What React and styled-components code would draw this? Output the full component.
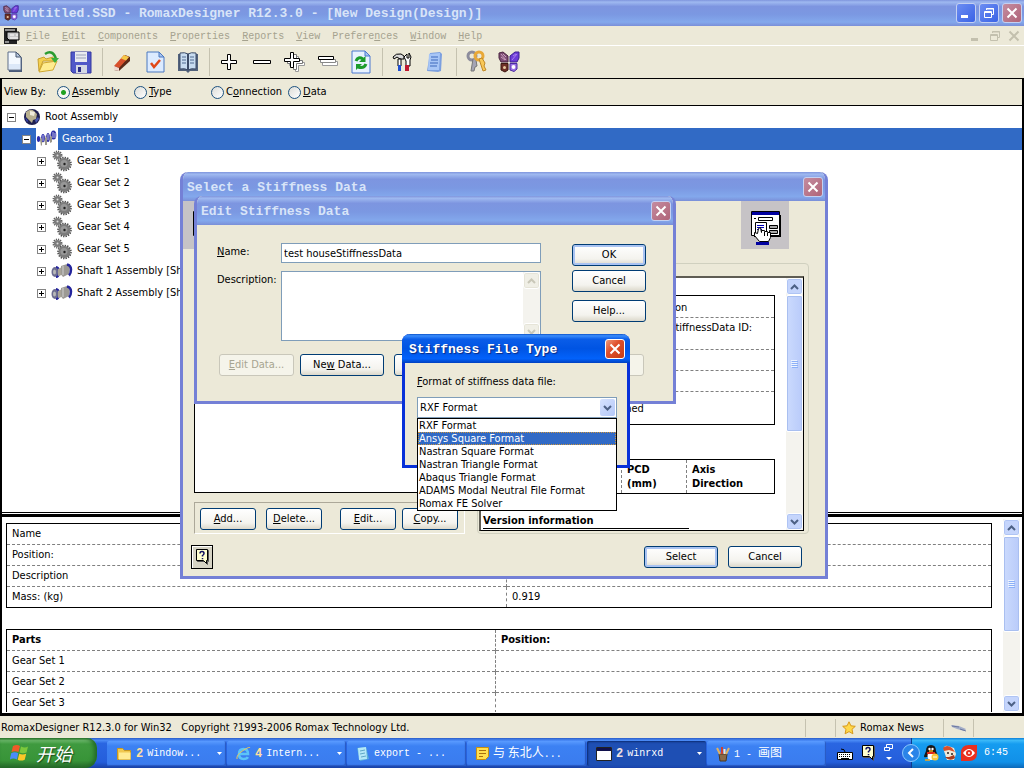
import { useState } from "react";
import styled, { createGlobalStyle, css } from "styled-components";

const colors = {
    face: "#ece9d8",
    select: "#316ac5",
    line: "#808080",
    buttonBorder: "#003c74",
    fieldBorder: "#7f9db9",
    disabled: "#a7a591",
};

const mono = `"Liberation Mono", "Noto Sans CJK SC", monospace`;

const GlobalStyle = createGlobalStyle`
    * {
        box-sizing: border-box;
    }

    body {
        margin: 0;
        background: #000;
        color: #000;
        font: 11px/14px "DejaVu Sans Condensed", "Noto Sans", sans-serif;
    }

    button, input, select, textarea {
        font: inherit;
        color: inherit;
    }

    svg {
        display: block;
        flex: none;
    }
`;

const Desktop = styled.div`
    position: relative;
    display: flex;
    flex-direction: column;
    height: 100vh;
    min-height: 640px;
    overflow: hidden;
`;

/* ---------- window chrome ---------- */

const TitleBar = styled.header`
    flex: none;
    display: flex;
    align-items: center;
    gap: 3px;
    height: ${({ $height }) => $height || 29}px;
    padding: 0 ${({ $main }) => ($main ? "2px 0 3px" : "2px 0 4px")};
    color: ${({ $active }) => ($active ? "#fff" : "#d8e4f8")};
    background: ${({ $active }) =>
        $active
            ? "linear-gradient(#0a51c8, #3b8dfc 6%, #0a5de8 18%, #0054e3 50%, #0262fb 85%, #0040c0)"
            : "linear-gradient(#7f95dd, #9fb9f0 8%, #7d95e0 25%, #7b98e2 55%, #83a8ec 85%, #7a8fd8)"};
`;

const TitleText = styled.h1`
    flex: 1;
    margin: 0;
    padding-top: 2px;
    font: bold 13px/16px ${mono};
    white-space: pre;
    ${({ $active }) =>
        $active &&
        css`
            text-shadow: 1px 1px 1px #0a2a80;
        `}
`;

const CaptionButton = styled.button`
    display: flex;
    align-items: center;
    justify-content: center;
    width: 20px;
    height: 20px;
    padding: 0;
    border: 1px solid ${({ $active }) => ($active ? "#fff" : "#c4d0f2")};
    border-radius: 3px;
    background: ${({ $close, $active }) => {
        if (!$close) return "linear-gradient(135deg, #6c8df2, #3a63e6)";
        return $active
            ? "linear-gradient(135deg, #ee9a7c, #e0502c 40%, #c43c14)"
            : "linear-gradient(135deg, #c48ca0, #b06478)";
    }};
`;

const MenuBar = styled.nav`
    flex: none;
    display: flex;
    align-items: center;
    gap: 12px;
    height: 20px;
    padding: 0 4px;
    background: ${colors.face};
    border-bottom: 1px solid #fff;
`;

const MenuItem = styled.button`
    padding: 2px 0 0;
    border: none;
    background: none;
    color: #a5a28f;
    font: 10px/14px ${mono};
`;

const MenuIcon = styled.span`
    margin-right: -6px;
`;

const MdiButtons = styled.div`
    display: flex;
    gap: 7px;
    margin-left: auto;
    color: #c3c0ae;
`;

const PlainButton = styled.button`
    padding: 0;
    border: none;
    background: none;
    color: inherit;
`;

const Toolbar = styled.div`
    flex: none;
    display: flex;
    align-items: center;
    height: 32px;
    background: ${colors.face};
`;

const ToolButton = styled.button`
    display: flex;
    align-items: center;
    justify-content: center;
    width: 33px;
    height: 28px;
    padding: 0;
    border: none;
    background: none;

    &:first-child {
        margin-left: -2px;
    }
`;

const ToolSeparator = styled.span`
    width: 1px;
    height: 28px;
    margin: 0 2px 0 5px;
    background: #c5c2b0;
`;

/* ---------- view selector ---------- */

const Workspace = styled.main`
    flex: 1;
    min-height: 0;
    display: flex;
    flex-direction: column;
    border: solid #000;
    border-width: 1px 2px 3px;
`;

const ViewBar = styled.div`
    flex: none;
    display: flex;
    align-items: center;
    height: 27px;
    padding-left: 2px;
    background: ${colors.face};
    border-bottom: 1px solid #000;
`;

const ViewCaption = styled.span`
    width: 53px;
`;

const RadioLabel = styled.label`
    display: flex;
    align-items: center;
    gap: 2px;
    width: 77px;
    white-space: nowrap;
`;

const Radio = styled.input`
    appearance: none;
    flex: none;
    width: 13px;
    height: 13px;
    margin: 0;
    border: 1px solid #1c5180;
    border-radius: 50%;
    background: linear-gradient(135deg, #dcdcd7, #fff);

    &:checked {
        background: radial-gradient(circle, #21a121 0 2px, #f6f6f2 3px);
    }
`;

/* ---------- assembly tree ---------- */

const Tree = styled.ul`
    flex: 407 1 0;
    min-height: 0;
    margin: 0;
    padding: 0;
    list-style: none;
    background: #fff;
    overflow: hidden;
`;

const TreeRow = styled.li`
    display: flex;
    align-items: center;
    height: 22px;
    padding-left: ${({ $level }) => 5 + $level * 15}px;
    white-space: nowrap;
    ${({ $selected }) =>
        $selected &&
        css`
            background: ${colors.select};
            color: #fff;
        `}
`;

const Expander = styled.button`
    display: flex;
    width: 9px;
    height: 9px;
    margin-right: 5px;
    padding: 0;
    border: 1px solid #848484;
    background: #fff;
`;

const TreeIcon = styled.span`
    display: flex;
    align-items: center;
    justify-content: center;
    width: 22px;
    height: 22px;
    margin-right: ${({ $root }) => ($root ? 2 : 4)}px;
    background: #fff;
`;

/* ---------- details ---------- */

const Splitter = styled.div`
    flex: none;
    height: 5px;
    border-top: 1px solid #000;
    border-bottom: 3px solid #000;
    background: #fff;
`;

const Details = styled.section`
    flex: 193 1 0;
    min-height: 0;
    display: flex;
    padding: 2px 2px 1px 4px;
    background: #fff;
`;

const DetailsBody = styled.div`
    flex: 1;
    margin-right: 11px;
    padding-top: 4px;
    overflow: hidden;
`;

const DetailTable = styled.table`
    width: 100%;
    margin-bottom: 21px;
    border: 1px solid #000;
    border-collapse: collapse;
    table-layout: fixed;

    tr {
        height: 21px;
    }

    tr + tr,
    tbody tr {
        border-top: 1px dashed ${colors.line};
    }

    th,
    td {
        padding: 0 5px;
        text-align: left;
    }

    td + td,
    th + th {
        border-left: 1px dashed ${colors.line};
    }
`;

const Col = styled.col`
    width: ${({ $width }) => $width}px;
`;

/* ---------- scrollbar ---------- */

const ScrollColumn = styled.div`
    flex: none;
    display: flex;
    flex-direction: column;
    width: 17px;
    background: #f4f3ee;
`;

const ScrollArrow = styled.button`
    flex: none;
    display: flex;
    align-items: center;
    justify-content: center;
    width: 17px;
    height: 17px;
    padding: 0;
    border: 1px solid #fff;
    border-radius: 3px;
    color: ${({ disabled }) => (disabled ? "#c9c7b8" : "#4d6185")};
    background: ${({ disabled }) => (disabled ? "#f0efe6" : "#c5d5fc")};
    box-shadow: inset 0 0 0 1px
        ${({ disabled }) => (disabled ? "#e6e4d8" : "#afc4f4")};
`;

const ScrollTrack = styled.div`
    flex: 1;
`;

const ScrollThumb = styled.div`
    display: flex;
    align-items: center;
    justify-content: center;
    height: ${({ $size }) => $size}%;
    border: 1px solid #fff;
    border-radius: 2px;
    background: linear-gradient(90deg, #cbdafd, #b9cbfa);
    box-shadow: inset 0 0 0 1px #a9bff0;
`;

const Chevron = ({ up }) => (
    <svg width="9" height="6" viewBox="0 0 9 6" fill="none">
        <path
            d={up ? "M1 5 4.500 1.500 8 5" : "M1 1 4.500 4.500 8 1"}
            stroke="currentColor"
            strokeWidth="2"
        />
    </svg>
);

const Scrollbar = ({ size, disabled }) => (
    <ScrollColumn>
        <ScrollArrow type="button" aria-label="Scroll up" disabled={disabled}>
            <Chevron up />
        </ScrollArrow>
        <ScrollTrack>
            {!disabled && (
                <ScrollThumb $size={size}>
                    <svg width="7" height="8" viewBox="0 0 7 8">
                        <path d="M0 .5h6M0 2.500h6M0 4.500h6M0 6.500h6" stroke="#eef4fe" />
                        <path d="M1 1.500h6M1 3.500h6M1 5.500h6M1 7.500h6" stroke="#8cb0f8" />
                    </svg>
                </ScrollThumb>
            )}
        </ScrollTrack>
        <ScrollArrow type="button" aria-label="Scroll down" disabled={disabled}>
            <Chevron />
        </ScrollArrow>
    </ScrollColumn>
);

/* ---------- dialogs ---------- */

const Dialog = styled.section`
    position: absolute;
    left: ${({ $x }) => $x}px;
    top: ${({ $y }) => $y}px;
    width: ${({ $width }) => $width}px;
    height: ${({ $height }) => $height}px;
    display: flex;
    flex-direction: column;
    border-radius: 8px 8px 0 0;
    overflow: ${({ $active }) => ($active ? "visible" : "hidden")};
    background: ${colors.face};
    border: 3px solid ${({ $active }) => ($active ? "#0831d9" : "#7480d6")};
    border-top: none;

    ${TitleBar} {
        margin: 0 -3px;
        padding: 0 5px 0 7px;
        border-radius: 8px 8px 0 0;
    }
`;

const PushButton = styled.button`
    width: ${({ $width }) => $width || 74}px;
    height: 22px;
    padding: 0;
    border: 1px solid ${colors.buttonBorder};
    border-radius: 3px;
    background: linear-gradient(#fff, #f4f3ee 70%, #dcd8cb);
    white-space: nowrap;

    ${({ $primary }) =>
        $primary &&
        css`
            box-shadow: inset 0 0 0 2px #a9c3f2;
        `}

    &:disabled {
        border-color: #c9c7ba;
        background: #f5f4ea;
        color: ${colors.disabled};
    }
`;

const DialogHeader = styled.div`
    display: flex;
    justify-content: space-between;
    padding-right: 36px;
`;

const HeaderIcon = styled.div`
    width: 48px;
    height: 48px;
    background: #c6c3c6;
`;

const SelectBody = styled.div`
    flex: 1;
    min-height: 0;
    display: flex;
    gap: 12px;
    padding: 14px 16px 0 11px;
`;

const ListColumn = styled.div`
    flex: none;
    display: flex;
    flex-direction: column;
    gap: 9px;
    width: 271px;
`;

const DataList = styled.div`
    flex: 1;
    border: 1px solid #000;
    border-top-color: #716f64;
    background: #fff;
`;

const ButtonGroup = styled.div`
    display: flex;
    justify-content: space-between;
    padding: 5px 6px 3px 5px;
    border: 1px solid;
    border-color: #aca899 #fff #fff #aca899;
`;

const ButtonPair = styled.div`
    display: flex;
    gap: ${({ $gap }) => $gap}px;
`;

const PreviewGroup = styled.div`
    flex: 1;
    min-width: 0;
    display: flex;
    padding: 12px 4px 2px 1px;
    border: 1px solid #d0d0bf;
    border-radius: 4px;
`;

const Preview = styled.div`
    flex: 1;
    min-width: 0;
    display: flex;
    border: 1px solid #000;
    border-top: 2px solid #5f5d54;
    border-left: 2px solid #5f5d54;
    background: #fff;
`;

const PreviewPage = styled.div`
    flex: 1;
    min-width: 0;
    padding: 17px 11px 0 2px;
    overflow: hidden;
`;

const PreviewTable = styled.table`
    width: 100%;
    border: 1px solid #000;
    border-collapse: collapse;
    table-layout: fixed;

    td,
    th {
        padding: 3px 5px 2px;
        text-align: left;
        vertical-align: top;
    }

    tr + tr {
        border-top: 1px dashed ${colors.line};
    }

    th + th {
        border-left: 1px dashed ${colors.line};
    }
`;

const PreviewRow = styled.tr`
    height: ${({ $height }) => $height}px;
`;

const InfoCell = styled.td`
    && {
        padding-top: ${({ $top }) => $top || 0}px;
        padding-left: ${({ $indent }) => $indent || 5}px;
        white-space: nowrap;
    }
`;

const HeadTable = styled(PreviewTable)`
    margin-top: 34px;
`;

const VersionHeading = styled.h2`
    width: 206px;
    margin: 20px 0 0;
    border-bottom: 1px solid #000;
    font-size: 11px;
    line-height: 14px;
`;

const DialogFooter = styled.div`
    display: flex;
    align-items: center;
    gap: 10px;
    height: 42px;
    padding: 4px 23px 0 8px;
`;

const HelpButton = styled.button`
    display: flex;
    align-items: center;
    justify-content: center;
    width: 22px;
    height: 24px;
    margin-right: auto;
    padding: 0;
    border: 1px solid #000;
    background: #d6d3c4;
    box-shadow: inset 1px 1px 0 #fff;
`;

const EditBody = styled.div`
    display: flex;
    justify-content: space-between;
    padding: 18px 27px 0 20px;
`;

const EditForm = styled.div`
    display: grid;
    grid-template-columns: 64px 260px;
    row-gap: 8px;
`;

const FieldLabel = styled.label`
    padding-top: 2px;
`;

const TextInput = styled.input`
    height: 20px;
    padding: 0 2px;
    border: 1px solid ${colors.fieldBorder};
    background: #fff;
`;

const TextAreaFrame = styled.div`
    display: flex;
    height: 70px;
    border: 1px solid ${colors.fieldBorder};
    background: #fff;
`;

const TextArea = styled.textarea`
    flex: 1;
    min-width: 0;
    border: none;
    padding: 2px;
    resize: none;
    outline: none;
`;

const ButtonStack = styled.div`
    display: flex;
    flex-direction: column;
    gap: 4px;
    padding-top: 1px;

    button:last-child {
        margin-top: 4px;
    }
`;

const EditActions = styled.div`
    display: flex;
    justify-content: space-between;
    padding: 13px 29px 0 22px;
`;

const FormatBody = styled.div`
    display: flex;
    flex-direction: column;
    gap: 8px;
    padding: 12px 10px 0 12px;
`;

const Combo = styled.div`
    position: relative;
    display: flex;
    align-items: center;
    height: 21px;
    border: 1px solid ${colors.fieldBorder};
    background: #fff;
`;

const ComboSelect = styled.select`
    appearance: none;
    flex: 1;
    padding: 0 2px;
    border: none;
    outline: none;
    background: none;
`;

const ComboArrow = styled.span`
    display: flex;
    align-items: center;
    justify-content: center;
    width: 15px;
    height: 17px;
    margin-right: 1px;
    border-radius: 2px;
    background: linear-gradient(135deg, #d6e2fe, #b4c8f8);
    color: #4d6185;
    pointer-events: none;
`;

const ComboList = styled.ul`
    position: absolute;
    top: 20px;
    left: -1px;
    right: -1px;
    margin: 0;
    padding: 0;
    list-style: none;
    border: 1px solid #000;
    background: #fff;
`;

const ComboOption = styled.li`
    height: 13px;
    padding-left: 1px;
    line-height: 14px;
    white-space: nowrap;
    ${({ $hot }) =>
        $hot &&
        css`
            background: ${colors.select};
            color: #fff;
            outline: 1px dotted #ce953a;
            outline-offset: -1px;
        `}
`;

/* ---------- status bar and taskbar ---------- */

const StatusBar = styled.footer`
    flex: none;
    display: flex;
    height: 22px;
    padding: 3px 50px 1px 1px;
    background: ${colors.face};
`;

const StatusCell = styled.div`
    flex: ${({ $grow }) => ($grow ? 1 : "none")};
    display: flex;
    align-items: center;
    gap: 4px;
    width: ${({ $width }) => ($width ? `${$width}px` : "auto")};
    padding-left: ${({ $grow }) => ($grow ? 0 : 6)}px;
    border-right: 1px solid #c5c2b0;
    white-space: pre;
`;

const Taskbar = styled.footer`
    flex: none;
    display: flex;
    height: 30px;
    color: #fff;
    background: linear-gradient(#2a5cc8, #4a8af5 8%, #2a66e2 18%, #245edb 80%, #1941a5);
    font: 10px/20px ${mono};
`;

const StartButton = styled.button`
    display: flex;
    align-items: center;
    gap: 6px;
    width: 97px;
    padding: 0 0 0 10px;
    border: none;
    border-radius: 0 10px 12px 0;
    background: linear-gradient(#2f7a2f, #6cb86a 8%, #3f9a3f 20%, #389438 75%, #26682a);
    box-shadow: inset -3px 0 4px #226a26;
    color: #fff;
    font: italic 18px/26px "Noto Sans CJK SC", sans-serif;
    text-shadow: 1px 1px 1px #1a4a1c;
`;

const TaskList = styled.div`
    flex: 1;
    display: flex;
    gap: 1px;
    padding: 3px 0 2px 10px;
    min-width: 0;
`;

const TaskButton = styled.button`
    flex: 0 1 119px;
    min-width: 0;
    display: flex;
    align-items: center;
    gap: 4px;
    padding: 0 4px 0 9px;
    border: none;
    border-radius: 2px;
    background: ${({ $pressed }) =>
        $pressed ? "#1e4fb4" : "linear-gradient(#5a9bff, #3c81f3 20%, #3a7bee)"};
    box-shadow: ${({ $pressed }) =>
        $pressed ? "inset 1px 1px 2px #0c2c72" : "inset -1px -1px 1px #2858c0"};
    white-space: pre;
`;

const TaskCount = styled.b`
    color: ${({ $pressed }) => ($pressed ? "#f0e0e0" : "#ffdf9f")};
    font-size: 12px;
`;

const TaskTitle = styled.span`
    flex: 1;
    text-align: left;
`;

const Cjk = styled.span`
    font: 12px/20px "Noto Sans CJK SC", sans-serif;
`;

const QuickItems = styled.div`
    display: flex;
    align-items: center;
    gap: 8px;
    padding: 0 18px 0 10px;
`;

const Tray = styled.div`
    display: flex;
    align-items: center;
    gap: 3px;
    width: 113px;
    border-left: 1px solid #0c3c8c;
    background: linear-gradient(#0c7fd8, #3ab8f8 8%, #159cf0 20%, #1190e8 80%, #0c68b8);

    button:first-child {
        margin-left: -10px;
    }
`;

const Clock = styled.time`
    margin-left: auto;
    padding-right: 16px;
`;

/* ---------- icons ---------- */

const Butterfly = ({ size = 22 }) => (
    <svg width={size} height={size} viewBox="0 0 22 22">
        <path d="M1 2l4-1 5 4v6H3L1 7Z" fill="#7c4c74" stroke="#4a2440" />
        <path d="M21 1h-4l-5 4v6h7l2-4Z" fill="#6c3cd8" stroke="#3a2090" />
        <path d="M3 12.500h7V19l-3 2-4-2Z" fill="#6e3028" stroke="#3c1810" />
        <path d="M12 12.500h7V18l-3 2.500-4-1.500Z" fill="#9a70e4" stroke="#4a2ca0" />
        <circle cx="6.500" cy="16.500" r="1.500" fill="#e8c8a0" />
        <circle cx="15.500" cy="16" r="1.900" fill="#fff" />
        <path d="M3 3l5 6M5 3l3 3M3 6l4 3" stroke="#e0b8d0" strokeWidth=".8" />
        <path d="M19 3l-5 6M18 3l-3 2" stroke="#b890f4" strokeWidth=".8" />
    </svg>
);

const NewIcon = () => (
    <svg width="24" height="24" viewBox="0 0 24 24">
        <path d="M6 3h9l4 5v14H6Z" fill="#4a5a78" />
        <path d="M5 2h8l5 5v13H5Z" fill="#f4f9ff" stroke="#5c6c88" />
        <path d="M13 2v5h5Z" fill="#b8c8e0" stroke="#46566e" />
        <path d="M6 14h11v5H6Z" fill="#dce8f8" />
    </svg>
);

const OpenIcon = () => (
    <svg width="24" height="24" viewBox="0 0 24 24">
        <path d="M2 9l6-2 2 2 7-2v4H7L3 21Z" fill="#f4d050" stroke="#c8a030" />
        <path d="M3 22l4-9 14-2-4 9Z" fill="#ffec90" stroke="#d0a830" />
        <path d="M9 4q8-5 11 5" fill="none" stroke="#2a9c30" strokeWidth="2.500" />
        <path d="M15 8h8l-4 5Z" fill="#38b03c" />
    </svg>
);

const SaveIcon = () => (
    <svg width="24" height="24" viewBox="0 0 24 24">
        <path d="M2 2h20v21H4l-2-2Z" fill="#5058c8" stroke="#3438a0" />
        <path d="M6 2h12v10H6Z" fill="#e8eaf0" />
        <path d="M7 5h10M7 8h10" stroke="#9aa0b8" />
        <path d="M7 15h11v8H7Z" fill="#d4d8e4" />
        <path d="M9 17h3v5H9Z" fill="#2a2c88" />
    </svg>
);

const EraserIcon = () => (
    <svg width="24" height="24" viewBox="0 0 24 24">
        <path d="M4 17 15 5l5 2v4L9 21l-5-1Z" fill="#5c2a18" />
        <path d="M4 16 14 5l5 2L9 18Z" fill="#d8502c" />
        <path d="M11 8.500 14 5l5 2-3 3.500Z" fill="#f4c848" />
        <path d="M4 16l5 2v3l-5-1Z" fill="#f0d8d0" />
    </svg>
);

const CheckDocIcon = () => (
    <svg width="24" height="24" viewBox="0 0 24 24">
        <path d="M4 2h12l5 5v15H4Z" fill="#dcebff" stroke="#4a78c0" />
        <path d="M16 2v5h5Z" fill="#a8c4f0" stroke="#4a78c0" />
        <path d="M8 13l3 4 6-7" fill="none" stroke="#e04818" strokeWidth="2.500" />
    </svg>
);

const BookIcon = () => (
    <svg width="24" height="24" viewBox="0 0 24 24">
        <path d="M2 4v17h8l2 2 2-2h8V4Z" fill="#52627c" />
        <path d="M4 3q5-1 8 1 3-2 8-1v16q-5-1-8 1-3-2-8-1Z" fill="#c8dcf0" stroke="#3c4c68" />
        <path d="M12 4v16" stroke="#3c4c68" strokeWidth="2" />
        <path d="M6 7h4M6 10h4M6 13h4M14 7h4M14 10h4M14 13h4" stroke="#7890b0" strokeWidth="1.500" />
    </svg>
);

const plusPath = "M7.500 1.500h3v6h6v3h-6v6h-3v-6h-6v-3h6Z";

const PlusIcon = () => (
    <svg width="18" height="18" viewBox="0 0 18 18">
        <path d={plusPath} fill="#fff" stroke="#000" />
    </svg>
);

const MinusIcon = () => (
    <svg width="18" height="18" viewBox="0 0 18 18">
        <path d="M.5 7.500h17v3H.5Z" fill="#fff" stroke="#000" />
    </svg>
);

const PlusAllIcon = () => (
    <svg width="23" height="22" viewBox="0 0 23 22">
        <path d={plusPath} transform="translate(5 4)" fill="#fff" stroke="#999" />
        <path d={plusPath} transform="translate(3 2)" fill="#fff" stroke="#777" />
        <path d={plusPath} fill="#fff" stroke="#000" />
    </svg>
);

const MinusAllIcon = () => (
    <svg width="22" height="18" viewBox="0 0 22 18">
        <path d="M5.500 8.500h15v4h-15Z" fill="#fff" stroke="#999" />
        <path d="M3.500 6.500h15v3h-15Z" fill="#fff" stroke="#888" />
        <path d="M1.500 3.500h15v3h-15Z" fill="#fff" stroke="#000" />
    </svg>
);

const RefreshIcon = () => (
    <svg width="24" height="24" viewBox="0 0 24 24">
        <path d="M3 1h13l5 5v17H3Z" fill="#e8f2ff" stroke="#4a78d0" />
        <path d="M16 1v5h5Z" fill="#a8c4f0" stroke="#4a78d0" />
        <path d="M7 11q2-5 7-2M17 14q-2 5-8 3" fill="none" stroke="#1c9c2c" strokeWidth="3" />
        <path d="M16.500 6v6H10ZM7 20v-6h6Z" fill="#1c9c2c" />
    </svg>
);

const ToolsIcon = () => (
    <svg width="20" height="20" viewBox="0 0 20 20">
        <path d="M1 5q3-4 8-3l3 2v3H8L5 5 2 7Z" fill="#ddd" stroke="#000" />
        <path d="M6 7h3v7H6Z" fill="#fff" stroke="#000" />
        <path d="M6 13h3v6H6Z" fill="#2050d0" />
        <path d="M17 1v5h-2V2l-3 3 2 4v5h4V8l1-3Z" fill="#fff" stroke="#000" />
        <path d="M13 13h4v6h-4Z" fill="#c01830" />
    </svg>
);

const ServerIcon = () => (
    <svg width="20" height="22" viewBox="0 0 20 22">
        <path d="M5 2l10-1 2 2-1 17-3 1-11-1Z" fill="#7ca0e0" />
        <path d="M4 3l11-1-1 17H3Z" fill="#a8c6f6" />
        <path d="M6 6h7M6 9h7M5 12h8M5 15h7" stroke="#6088d0" strokeWidth="1.500" />
    </svg>
);

const KeysIcon = () => (
    <svg width="24" height="24" viewBox="0 0 24 24">
        <circle cx="8" cy="6" r="4" fill="none" stroke="#8c8c9c" strokeWidth="3" />
        <path d="M9 9l-2 12h3l1-4 2-1-1-6" fill="#a4a4b4" stroke="#777" />
        <circle cx="15" cy="6" r="4" fill="none" stroke="#e8a838" strokeWidth="3" />
        <path d="M15 9l4 12 3-1-2-4 1-3-3-5Z" fill="#f8c858" stroke="#c08828" />
    </svg>
);

const WindowLogo = () => (
    <svg width="16" height="16" viewBox="0 0 16 16">
        <path d="M0 0h13v16H0Z" fill="#222" />
        <path d="M3 4h12v8H5l-2-2Z" fill="#c8c8c8" stroke="#000" />
        <path d="M1 2h10M6 7h4M12 7h2M6 10h8M1 14h4" stroke="#fff" />
    </svg>
);

const CaptionGlyph = ({ kind }) => (
    <svg width="12" height="12" viewBox="0 0 12 12" fill="none" stroke="currentColor">
        {kind === "minimize" && <path d="M1 9.500h7" strokeWidth="3" />}
        {kind === "restore" && (
            <path d="M3.500 3V1.500h7v6H9M3 2h8M1.500 4.500h7v6h-7ZM1 5.500h8" />
        )}
        {kind === "close" && <path d="M1.500 1.500l9 9M10.500 1.500l-9 9" strokeWidth="2" />}
    </svg>
);

const GlobeIcon = () => (
    <svg width="18" height="18" viewBox="0 0 18 18">
        <circle cx="9" cy="9" r="8" fill="#202050" />
        <path d="M3 4q5-4 8-1l3 3-1 5-3 1-1 3-3-3-3-3Z" fill="#b8b090" />
        <path d="M7 3l5 1-1 4-4-1Z" fill="#f0ecdc" />
        <path d="M12 12l3-3 1 2-3 4Z" fill="#4858b0" />
        <path d="M2 9l3 4-1 1Z" fill="#3848c8" />
    </svg>
);

const GearboxIcon = () => (
    <svg width="22" height="20" viewBox="0 0 22 20">
        <path d="M1 9l19-5v5L6 14Z" fill="#d0ccc0" />
        <ellipse cx="2.500" cy="10" rx="1.600" ry="3" fill="#2c2cac" />
        <ellipse cx="7" cy="9" rx="1.800" ry="4" fill="#2c2cac" />
        <ellipse cx="12" cy="8.500" rx="1.800" ry="4.500" fill="#3838a8" />
        <ellipse cx="17.500" cy="6" rx="2.800" ry="4.500" fill="#3030a8" />
        <path d="M4 10l2-1v7l-1 1ZM9 9l2-1v8H9ZM14 8l2-1v6l-2 1Z" fill="#9c988c" />
        <path d="M7 6v6M12 5v6M17 3v6M19 4v5" stroke="#dcdcf4" strokeWidth=".8" />
    </svg>
);

const GearIcon = () => (
    <svg width="22" height="22" viewBox="0 0 22 22" fill="#7c7c7c">
        <circle cx="6.500" cy="5.500" r="3.600" />
        <circle cx="6.500" cy="5.500" r="4.200" fill="none" stroke="#606060" strokeWidth="1.600" strokeDasharray="1.200 1" />
        <circle cx="6.500" cy="5.500" r="1" fill="#ddd" />
        <circle cx="13.500" cy="14" r="6" />
        <circle cx="13.500" cy="14" r="6.500" fill="none" stroke="#505050" strokeWidth="1.600" strokeDasharray="1.400 1.100" />
        <circle cx="13" cy="13.500" r="3.500" fill="#989898" />
        <circle cx="13.500" cy="14" r="1.200" fill="#222" />
    </svg>
);

const ShaftIcon = () => (
    <svg width="22" height="16" viewBox="0 0 22 16">
        <ellipse cx="4" cy="9" rx="3.500" ry="5" fill="#6c6c90" />
        <ellipse cx="3.500" cy="9" rx="1.500" ry="2.500" fill="#b8b8b8" />
        <path d="M5 4q3 0 3 5t-3 5" fill="none" stroke="#24249c" strokeWidth="2" />
        <path d="M7 6l4-2v8l-4 1Z" fill="#a8a498" />
        <path d="M10 3l6-2q4 2 2 10l-6 3q-2-2-2-5Z" fill="#9c9a94" />
        <path d="M16 1.500q4 1 4 5t-2 6" fill="none" stroke="#24249c" strokeWidth="2.500" />
        <path d="M12 3v9" stroke="#d0d0d0" />
    </svg>
);

const PickIcon = () => (
    <svg width="48" height="48" viewBox="0 0 48 48">
        <path d="M13 14h27v22H13Z" fill="#000" />
        <path d="M10.500 10.500h28v24h-28Z" fill="#fff" stroke="#000" />
        <path d="M11 11h27v3H11Z" fill="#0000a0" />
        <path d="M13 17.500h2M17.500 16.500h14v3h-14Z" fill="none" stroke="#000" />
        <path d="M14.500 21.500h11v12h-11Z" fill="#fff" stroke="#000" />
        <path d="M16 24.500h7M16 26.500h7M16 28.500h5" stroke="#0000c0" />
        <path d="M28.500 24.500h8v3h-8ZM28.500 29.500h8v3h-8Z" fill="#aaa" stroke="#000" />
        <path d="M17.500 27.500l2-1 1 5v-2h3v1h3v1h3v5l-2 4h-9l-5-6v-3l3 1Z" fill="#fff" stroke="#000" />
        <path d="M23.500 31v4M26.500 32v3" stroke="#000" />
        <path d="M15 41h13v3H15Z" fill="#0000a0" />
    </svg>
);

const HelpIcon = () => (
    <svg width="15" height="17" viewBox="0 0 15 17">
        <path d="M2.500 1.500h11v11h-1v3l-3-3h-7Z" fill="#8a8878" stroke="#555" />
        <path d="M1.500.5h11v11h-1v3l-3-3h-7Z" fill="#ffffd0" stroke="#000" />
        <path d="M5 4.500q0-2 2-2t2 2q0 1-1.500 2v1M7.500 9v1.300" fill="none" stroke="#101060" strokeWidth="1.500" />
    </svg>
);

const StarIcon = () => (
    <svg width="14" height="14" viewBox="0 0 14 14">
        <path d="M7 .8l1.900 4 4.400.5-3.300 3 .9 4.500L7 10.600l-3.900 2.200.9-4.500-3.300-3 4.400-.5Z" fill="#ffd84a" stroke="#d89818" />
    </svg>
);

const PenIcon = () => (
    <svg width="18" height="10" viewBox="0 0 18 10">
        <path d="M1 2l8 1 7 3-2 2-7-2-5-2Z" fill="#a4aec8" />
        <path d="M2 3l7 1M10 6l6 2" stroke="#6c78a0" />
    </svg>
);

const WindowsFlag = () => (
    <svg width="20" height="18" viewBox="0 0 20 18">
        <path d="M3 2q4-2 7 0L8.500 8Q5 6.500 1.500 8Z" fill="#f05a28" />
        <path d="M11 2.500q4 2 7 0l-1.500 6q-3.500 1.500-7 0Z" fill="#7cc83c" />
        <path d="M1.200 9.200q3.500-1.700 7 0L7 15.500q-4-2-7.200 0Z" fill="#4a8cf8" />
        <path d="M9.200 9.700q3.500 1.600 7 0l-1.500 6q-4 1.700-7 0Z" fill="#fcc828" />
    </svg>
);

const FolderIcon = () => (
    <svg width="16" height="14" viewBox="0 0 16 14">
        <path d="M1.500 1.500h5l2 2h6v9h-13Z" fill="#f0c850" stroke="#c89820" />
        <path d="M3 5.500h11.500v7H3Z" fill="#ffeb94" />
    </svg>
);

const IeIcon = () => (
    <svg width="15" height="15" viewBox="0 0 15 15" fill="none">
        <path d="M3 8h9q0-5-4.500-5T3 8q0 5 4.500 5 3.500 0 4.300-2" stroke="#5cc4f8" strokeWidth="2.500" />
        <path d="M1 13Q0 9 7 4.500T14 2" stroke="#e8c860" />
    </svg>
);

const NotebookIcon = () => (
    <svg width="14" height="16" viewBox="0 0 14 16">
        <path d="M1 2l9-1 3 12-9 2Z" fill="#5ab0d8" />
        <path d="M2 2l8-1 1 12-8 1Z" fill="#b4e8f8" />
        <path d="M4 5l5-1M4 8l5-1M5 11l5-1" stroke="#60a8c8" />
    </svg>
);

const NoteIcon = () => (
    <svg width="13" height="13" viewBox="0 0 13 13">
        <path d="M.5.5h12v9l-3 3h-9Z" fill="#ffdf50" stroke="#c89010" />
        <path d="M3 3.500h7M3 6.500h7M3 9.500h4" stroke="#a87010" />
    </svg>
);

const AppWindowIcon = () => (
    <svg width="16" height="14" viewBox="0 0 16 14">
        <path d="M.5.5h15v13H.5Z" fill="#fff" stroke="#222" />
        <path d="M1 1h14v3H1Z" fill="#10104c" />
    </svg>
);

const BrushesIcon = () => (
    <svg width="14" height="16" viewBox="0 0 14 16">
        <path d="M3 8h8l-1 7H4Z" fill="#8a6a48" stroke="#4c3820" />
        <path d="M4 8L1 2M10 8l3-6" stroke="#e0b060" strokeWidth="2" />
        <path d="M6 8V1" stroke="#d04030" strokeWidth="2" />
        <path d="M8.500 8V3" stroke="#f0e8d0" strokeWidth="2" />
    </svg>
);

const KeyboardIcon = () => (
    <svg width="16" height="13" viewBox="0 0 16 13">
        <path d="M8 5Q8 2 4 2" fill="none" stroke="#000" />
        <path d="M.5 5.500h15v7H.5Z" fill="#fff" stroke="#000" />
        <path d="M2 7.500h12M2 9.500h12" stroke="#000" strokeDasharray="1 1" />
        <path d="M4 11.500h8" stroke="#000" />
    </svg>
);

const TinyRestore = () => (
    <svg width="9" height="18" viewBox="0 0 9 18">
        <path d="M2.500 3V.5h6v4H6M.5 3.500h5v3h-5Z" fill="none" stroke="#fff" />
        <path d="M2 13h6l-3 3Z" fill="#fff" />
    </svg>
);

const TrayArrow = () => (
    <svg width="18" height="18" viewBox="0 0 18 18">
        <circle cx="9" cy="9" r="8.500" fill="#2a84e8" stroke="#8cc8fc" />
        <path d="M11 5L7 9l4 4" fill="none" stroke="#fff" strokeWidth="2" />
    </svg>
);

const PenguinIcon = () => (
    <svg width="16" height="16" viewBox="0 0 16 16">
        <path d="M3 12q-2 1-2-1l2-5q0-6 5-6t5 6l2 5q0 2-2 1Z" fill="#181818" />
        <ellipse cx="8" cy="11" rx="3.500" ry="4" fill="#fff" />
        <path d="M4 7h8v2H4Z" fill="#e02818" />
        <circle cx="6.500" cy="4" r="1.200" fill="#fff" />
        <circle cx="9.500" cy="4" r="1.200" fill="#fff" />
        <path d="M6 6h4M2 15h5" stroke="#f8a818" strokeWidth="1.500" />
        <circle cx="12" cy="12" r="3.500" fill="#f8c838" />
        <path d="M10 12h4" stroke="#fff" />
    </svg>
);

const AvatarIcon = () => (
    <svg width="16" height="16" viewBox="0 0 16 16">
        <path d="M2 6Q1 0 6 1l6 2 2 6-2 6H5Z" fill="#f0e8d8" />
        <path d="M1 3q4-4 9 0l3 4-6-2-5 1Z" fill="#d8502c" />
        <path d="M3 12q5 5 10 1l-1-3-5 2Z" fill="#a83c20" />
        <circle cx="6" cy="8" r="1" fill="#222" />
        <circle cx="10" cy="9" r="1" fill="#222" />
    </svg>
);

const RisingIcon = () => (
    <svg width="16" height="16" viewBox="0 0 16 16">
        <path d="M0 8Q0 0 8 0h8v8q0 8-8 8H0Z" fill="#e83020" />
        <path d="M2 8q6-8 12 0-6 8-12 0Z" fill="#fff" />
        <circle cx="8" cy="8" r="3" fill="#e83020" />
        <circle cx="8" cy="8" r="1" fill="#fff" />
    </svg>
);

const DropArrow = () => (
    <svg width="5" height="3" viewBox="0 0 5 3">
        <path d="M0 0h5L2.500 3Z" fill="#fff" />
    </svg>
);

/* ---------- data ---------- */

const menus = [
    ["", "F", "ile"],
    ["", "E", "dit"],
    ["", "C", "omponents"],
    ["", "P", "roperties"],
    ["", "R", "eports"],
    ["", "V", "iew"],
    ["Prefere", "n", "ces"],
    ["", "W", "indow"],
    ["", "H", "elp"],
];

const toolGroups = [
    [
        ["New", NewIcon],
        ["Open", OpenIcon],
        ["Save", SaveIcon],
    ],
    [
        ["Erase", EraserIcon],
        ["Check", CheckDocIcon],
        ["Library", BookIcon],
    ],
    [
        ["Expand", PlusIcon],
        ["Collapse", MinusIcon],
        ["Expand all", PlusAllIcon],
        ["Collapse all", MinusAllIcon],
        ["Refresh", RefreshIcon],
    ],
    [
        ["Tools", ToolsIcon],
        ["Server", ServerIcon],
    ],
    [
        ["Keys", KeysIcon],
        ["About", Butterfly],
    ],
];

const views = [
    ["", "A", "ssembly"],
    ["", "T", "ype"],
    ["C", "o", "nnection"],
    ["", "D", "ata"],
];

const treeItems = [
    { title: "Root Assembly", level: 0, open: true, icon: GlobeIcon },
    { title: "Gearbox 1", level: 1, open: true, icon: GearboxIcon, selected: true },
    { title: "Gear Set 1", level: 2, icon: GearIcon },
    { title: "Gear Set 2", level: 2, icon: GearIcon },
    { title: "Gear Set 3", level: 2, icon: GearIcon },
    { title: "Gear Set 4", level: 2, icon: GearIcon },
    { title: "Gear Set 5", level: 2, icon: GearIcon },
    { title: "Shaft 1 Assembly [Sh", level: 2, icon: ShaftIcon },
    { title: "Shaft 2 Assembly [Sh", level: 2, icon: ShaftIcon },
];

const properties = [
    ["Name", ""],
    ["Position:", ""],
    ["Description", ""],
    ["Mass: (kg)", "0.919"],
];

const formats = [
    "RXF Format",
    "Ansys Square Format",
    "Nastran Square Format",
    "Nastran Triangle Format",
    "Abaqus Triangle Format",
    "ADAMS Modal Neutral File Format",
    "Romax FE Solver",
];

/* ---------- parts ---------- */

const Mnemonic = ({ parts: [before, key, after] }) => (
    <>
        {before}
        <u>{key}</u>
        {after}
    </>
);

const CloseButton = ({ active }) => (
    <CaptionButton type="button" aria-label="Close" $close $active={active}>
        <CaptionGlyph kind="close" />
    </CaptionButton>
);

const WhiteGlyphs = styled.div`
    display: flex;
    gap: 3px;

    button {
        color: #fff;
    }
`;

const AssemblyTree = () => (
    <Tree>
        {treeItems.map(({ title, level, open, icon: Icon, selected }) => (
            <TreeRow key={title} $level={level} $selected={selected}>
                <Expander type="button" aria-label={open ? "Collapse" : "Expand"}>
                    <svg width="7" height="7" viewBox="0 0 7 7">
                        <path d={open ? "M1 3.500h5" : "M1 3.500h5M3.500 1v5"} stroke="#000" />
                    </svg>
                </Expander>
                <TreeIcon $root={level === 0}>
                    <Icon />
                </TreeIcon>
                {title}
            </TreeRow>
        ))}
    </Tree>
);

const SelectDialog = () => (
    <Dialog $x={180} $y={172} $width={648} $height={407} aria-label="Select a Stiffness Data">
        <TitleBar>
            <TitleText>Select a Stiffness Data</TitleText>
            <WhiteGlyphs>
                <CloseButton />
            </WhiteGlyphs>
        </TitleBar>
        <DialogHeader>
            <HeaderIcon>
                <PickIcon />
            </HeaderIcon>
            <HeaderIcon>
                <PickIcon />
            </HeaderIcon>
        </DialogHeader>
        <SelectBody>
            <ListColumn>
                <DataList />
                <ButtonGroup>
                    <ButtonPair $gap={10}>
                        <PushButton type="button" $width={56}>
                            <Mnemonic parts={["", "A", "dd..."]} />
                        </PushButton>
                        <PushButton type="button" $width={56}>
                            <Mnemonic parts={["", "D", "elete..."]} />
                        </PushButton>
                    </ButtonPair>
                    <ButtonPair $gap={6}>
                        <PushButton type="button" $width={56}>
                            <Mnemonic parts={["", "E", "dit..."]} />
                        </PushButton>
                        <PushButton type="button" $width={56}>
                            <Mnemonic parts={["", "C", "opy..."]} />
                        </PushButton>
                    </ButtonPair>
                </ButtonGroup>
            </ListColumn>
            <PreviewGroup>
                <Preview>
                    <PreviewPage>
                        <PreviewTable>
                            <tbody>
                                <PreviewRow $height={22}>
                                    <InfoCell $indent={147} $top={5}>
                                        Description
                                    </InfoCell>
                                </PreviewRow>
                                <PreviewRow $height={32}>
                                    <InfoCell $indent={151} $top={3}>
                                        House StiffnessData ID:
                                    </InfoCell>
                                </PreviewRow>
                                <PreviewRow $height={21}>
                                    <InfoCell />
                                </PreviewRow>
                                <PreviewRow $height={21}>
                                    <InfoCell />
                                </PreviewRow>
                                <PreviewRow $height={33}>
                                    <InfoCell $indent={109} $top={10}>
                                        Undefined
                                    </InfoCell>
                                </PreviewRow>
                            </tbody>
                        </PreviewTable>
                        <HeadTable>
                            <colgroup>
                                <col />
                                <Col $width={65} />
                                <Col $width={88} />
                            </colgroup>
                            <thead>
                                <PreviewRow $height={33}>
                                    <th aria-label="Node" />
                                    <th>
                                        PCD
                                        <br />
                                        (mm)
                                    </th>
                                    <th>
                                        Axis
                                        <br />
                                        Direction
                                    </th>
                                </PreviewRow>
                            </thead>
                        </HeadTable>
                        <VersionHeading>Version information</VersionHeading>
                    </PreviewPage>
                    <Scrollbar size={63} />
                </Preview>
            </PreviewGroup>
        </SelectBody>
        <DialogFooter>
            <HelpButton type="button" aria-label="Help">
                <HelpIcon />
            </HelpButton>
            <PushButton type="button" $primary>
                Select
            </PushButton>
            <PushButton type="button">Cancel</PushButton>
        </DialogFooter>
    </Dialog>
);

const EditDialog = () => (
    <Dialog $x={194} $y={196} $width={482} $height={208} aria-label="Edit Stiffness Data">
        <TitleBar>
            <TitleText>Edit Stiffness Data</TitleText>
            <WhiteGlyphs>
                <CloseButton />
            </WhiteGlyphs>
        </TitleBar>
        <EditBody>
            <EditForm>
                <FieldLabel htmlFor="name">
                    <Mnemonic parts={["", "N", "ame:"]} />
                </FieldLabel>
                <TextInput id="name" defaultValue="test houseStiffnessData" />
                <FieldLabel htmlFor="description">Description:</FieldLabel>
                <TextAreaFrame>
                    <TextArea id="description" />
                    <Scrollbar disabled />
                </TextAreaFrame>
            </EditForm>
            <ButtonStack>
                <PushButton type="button" $primary>
                    OK
                </PushButton>
                <PushButton type="button">Cancel</PushButton>
                <PushButton type="button">Help...</PushButton>
            </ButtonStack>
        </EditBody>
        <EditActions>
            <ButtonPair $gap={6}>
                <PushButton type="button" $width={75} disabled>
                    <Mnemonic parts={["", "E", "dit Data..."]} />
                </PushButton>
                <PushButton type="button" $width={84}>
                    <Mnemonic parts={["Ne", "w", " Data..."]} />
                </PushButton>
            </ButtonPair>
            <ButtonPair $gap={6}>
                <PushButton type="button" $width={84} aria-label="Import data" />
                <PushButton type="button" $width={160} disabled aria-label="Export data" />
            </ButtonPair>
        </EditActions>
    </Dialog>
);

const FormatDialog = () => {
    const [format, setFormat] = useState(formats[0]);
    const [hot, setHot] = useState(formats[1]);

    return (
        <Dialog $x={402} $y={334} $width={228} $height={134} $active aria-label="Stiffness File Type">
            <TitleBar $active>
                <TitleText $active>Stiffness File Type</TitleText>
                <WhiteGlyphs>
                    <CloseButton active />
                </WhiteGlyphs>
            </TitleBar>
            <FormatBody>
                <label htmlFor="format">
                    <Mnemonic parts={["", "F", "ormat of stiffness data file:"]} />
                </label>
                <Combo>
                    <ComboSelect
                        id="format"
                        value={format}
                        onChange={(e) => setFormat(e.target.value)}
                    >
                        {formats.map((f) => (
                            <option key={f}>{f}</option>
                        ))}
                    </ComboSelect>
                    <ComboArrow>
                        <Chevron />
                    </ComboArrow>
                    <ComboList role="listbox" aria-label="Formats">
                        {formats.map((f) => (
                            <ComboOption
                                key={f}
                                role="option"
                                aria-selected={f === hot}
                                $hot={f === hot}
                                onMouseEnter={() => setHot(f)}
                                onClick={() => setFormat(f)}
                            >
                                {f}
                            </ComboOption>
                        ))}
                    </ComboList>
                </Combo>
            </FormatBody>
        </Dialog>
    );
};

const App = () => {
    const [view, setView] = useState("A");

    return (
        <>
            <GlobalStyle />
            <Desktop>
                <TitleBar $height={26} $main>
                    <Butterfly size={16} />
                    <TitleText>
                        untitled.SSD - RomaxDesigner R12.3.0 - [New Design(Design)]
                    </TitleText>
                    <WhiteGlyphs>
                        <CaptionButton type="button" aria-label="Minimize">
                            <CaptionGlyph kind="minimize" />
                        </CaptionButton>
                        <CaptionButton type="button" aria-label="Restore">
                            <CaptionGlyph kind="restore" />
                        </CaptionButton>
                        <CloseButton />
                    </WhiteGlyphs>
                </TitleBar>
                <MenuBar>
                    <MenuIcon>
                        <WindowLogo />
                    </MenuIcon>
                    {menus.map((parts) => (
                        <MenuItem key={parts.join("")} type="button">
                            <Mnemonic parts={parts} />
                        </MenuItem>
                    ))}
                    <MdiButtons>
                        {["minimize", "restore", "close"].map((kind) => (
                            <PlainButton key={kind} type="button" aria-label={kind}>
                                <CaptionGlyph kind={kind} />
                            </PlainButton>
                        ))}
                    </MdiButtons>
                </MenuBar>
                <Toolbar>
                    {toolGroups.flatMap((group, i) => [
                        i > 0 && <ToolSeparator key={`separator-${i}`} />,
                        ...group.map(([label, Icon]) => (
                            <ToolButton key={label} type="button" aria-label={label}>
                                <Icon />
                            </ToolButton>
                        )),
                    ])}
                </Toolbar>
                <Workspace>
                    <ViewBar>
                        <ViewCaption>View By:</ViewCaption>
                        {views.map((parts) => (
                            <RadioLabel key={parts[1]}>
                                <Radio
                                    type="radio"
                                    name="view"
                                    checked={view === parts[1]}
                                    onChange={() => setView(parts[1])}
                                />
                                <span>
                                    <Mnemonic parts={parts} />
                                </span>
                            </RadioLabel>
                        ))}
                    </ViewBar>
                    <AssemblyTree />
                    <Splitter />
                    <Details>
                        <DetailsBody>
                            <DetailTable>
                                <colgroup>
                                    <Col $width={500} />
                                    <col />
                                </colgroup>
                                <tbody>
                                    {properties.map(([name, value]) => (
                                        <tr key={name}>
                                            <td>{name}</td>
                                            <td>{value}</td>
                                        </tr>
                                    ))}
                                </tbody>
                            </DetailTable>
                            <DetailTable>
                                <colgroup>
                                    <Col $width={489} />
                                    <col />
                                </colgroup>
                                <thead>
                                    <tr>
                                        <th>Parts</th>
                                        <th>Position:</th>
                                    </tr>
                                </thead>
                                <tbody>
                                    {[1, 2, 3].map((n) => (
                                        <tr key={n}>
                                            <td>Gear Set {n}</td>
                                            <td />
                                        </tr>
                                    ))}
                                </tbody>
                            </DetailTable>
                        </DetailsBody>
                        <Scrollbar size={60} />
                    </Details>
                </Workspace>
                <StatusBar>
                    <StatusCell $grow>
                        {"RomaxDesigner R12.3.0 for Win32   Copyright ?1993-2006 Romax Technology Ltd."}
                    </StatusCell>
                    <StatusCell $width={30} />
                    <StatusCell $width={108}>
                        <StarIcon />
                        Romax News
                    </StatusCell>
                    <StatusCell $width={30}>
                        <PenIcon />
                    </StatusCell>
                </StatusBar>
                <Taskbar>
                    <StartButton type="button">
                        <WindowsFlag />
                        开始
                    </StartButton>
                    <TaskList>
                        <TaskButton type="button">
                            <FolderIcon />
                            <TaskCount>2</TaskCount>
                            <TaskTitle>Window...</TaskTitle>
                            <DropArrow />
                        </TaskButton>
                        <TaskButton type="button">
                            <IeIcon />
                            <TaskCount>4</TaskCount>
                            <TaskTitle>Intern...</TaskTitle>
                            <DropArrow />
                        </TaskButton>
                        <TaskButton type="button">
                            <NotebookIcon />
                            <TaskTitle>export - ...</TaskTitle>
                        </TaskButton>
                        <TaskButton type="button">
                            <NoteIcon />
                            <TaskTitle>
                                <Cjk>与 东北人</Cjk>...
                            </TaskTitle>
                        </TaskButton>
                        <TaskButton type="button" $pressed>
                            <AppWindowIcon />
                            <TaskCount $pressed>2</TaskCount>
                            <TaskTitle>winrxd</TaskTitle>
                            <DropArrow />
                        </TaskButton>
                        <TaskButton type="button">
                            <BrushesIcon />
                            <TaskTitle>
                                1 - <Cjk>画图</Cjk>
                            </TaskTitle>
                        </TaskButton>
                    </TaskList>
                    <QuickItems>
                        <KeyboardIcon />
                        <HelpIcon />
                        <TinyRestore />
                    </QuickItems>
                    <Tray>
                        <PlainButton type="button" aria-label="Show hidden icons">
                            <TrayArrow />
                        </PlainButton>
                        <PenguinIcon />
                        <AvatarIcon />
                        <RisingIcon />
                        <Clock>6:45</Clock>
                    </Tray>
                </Taskbar>
                <SelectDialog />
                <EditDialog />
                <FormatDialog />
            </Desktop>
        </>
    );
};

export default App;
